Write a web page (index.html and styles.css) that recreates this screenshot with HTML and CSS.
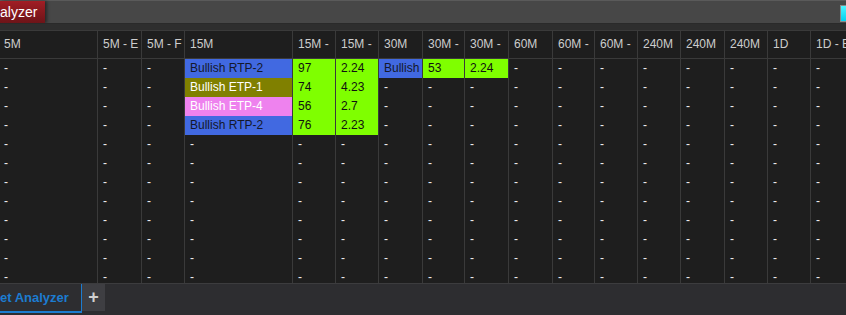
FILE: index.html
```html
<!DOCTYPE html>
<html lang="en">
<head>
    <meta charset="UTF-8">
    <title>Market Analyzer</title>
    <link rel="stylesheet" href="styles.css">
</head>
<body>
    <div class="topbar">
        <div class="doc-tab">alyzer</div>
        <div class="topbar-fill"></div>
        <div class="swatch"></div>
    </div>
    <div class="band"></div>

    <div class="grid-wrap">
        <div class="grid" id="grid">
            <!-- header + rows are built below -->
        </div>
    </div>

    <div class="tabbar">
        <div class="tab">et Analyzer</div>
        <div class="add-tab">+</div>
    </div>

    <script>
        const headers = ['5M', '5M - E', '5M - F', '15M', '15M -', '15M -', '30M', '30M -', '30M -',
            '60M', '60M -', '60M -', '240M', '240M', '240M', '1D', '1D - E'];

        // colored cells per row: column index -> [text, class]
        const filled = [
            { 3: ['Bullish RTP-2', 'blue'], 4: ['97', 'green'], 5: ['2.24', 'green'],
              6: ['Bullish', 'blue'], 7: ['53', 'green'], 8: ['2.24', 'green'] },
            { 3: ['Bullish ETP-1', 'olive'], 4: ['74', 'green'], 5: ['4.23', 'green'] },
            { 3: ['Bullish ETP-4', 'violet'], 4: ['56', 'green'], 5: ['2.7', 'green'] },
            { 3: ['Bullish RTP-2', 'blue'], 4: ['76', 'green'], 5: ['2.23', 'green'] }
        ];

        const grid = document.getElementById('grid');

        const head = document.createElement('div');
        head.className = 'row head';
        headers.forEach(h => {
            const cell = document.createElement('div');
            cell.className = 'cell';
            cell.textContent = h;
            head.appendChild(cell);
        });
        grid.appendChild(head);

        for (let r = 0; r < 12; r++) {
            const row = document.createElement('div');
            row.className = 'row';
            const data = filled[r] || {};
            headers.forEach((h, c) => {
                const cell = document.createElement('div');
                cell.className = 'cell';
                if (data[c]) {
                    cell.textContent = data[c][0];
                    cell.classList.add(data[c][1]);
                } else {
                    cell.textContent = '-';
                }
                row.appendChild(cell);
            });
            grid.appendChild(row);
        }
    </script>
</body>
</html>
```

FILE: styles.css
```css
html, body {
    margin: 0;
    padding: 0;
}

body {
    width: 846px;
    height: 315px;
    overflow: hidden;
    background-color: #1e1e1e;
    font-family: "Liberation Sans", Arial, sans-serif;
    font-size: 12px;
    display: flex;
    flex-direction: column;
}

/* top document strip */
.topbar {
    height: 22px;
    flex: none;
    display: flex;
    align-items: stretch;
    background-color: #474747;
    border-top: 1px solid #5a5a5a;
}

.doc-tab {
    width: 45px;
    box-sizing: border-box;
    padding-left: 0;
    color: #ffffff;
    font-size: 14px;
    line-height: 22px;
    background: linear-gradient(#a11d24, #6d1418);
    box-shadow: 2px 0 3px rgba(0, 0, 0, 0.45);
}

.topbar-fill {
    flex: 1;
}

.swatch {
    width: 5px;
    height: 15px;
    margin-top: 4px;
    background: linear-gradient(#4ff3ff, #00d2f0);
    border: 1px solid #8a8a8a;
    border-right: none;
}

.band {
    height: 6px;
    flex: none;
    background-color: #2e2e2e;
    border-top: 1px solid #2a2a2a;
}

/* grid */
.grid-wrap {
    flex: 1;
    overflow: hidden;
    border-top: 1px solid #3a3a3a;
}

.grid {
    width: 890px;
}

.row {
    display: grid;
    grid-template-columns: 97px 44px 43px 108px 43px 43px 44px 42px 44px 44px 42px 43px 43px 44px 43px 43px 80px;
    height: 19px;
}

.row.head {
    height: 27px;
    border-bottom: 1px solid #3a3a3a;
}

.cell {
    box-sizing: border-box;
    border-left: 1px solid #3a3a3a;
    padding-left: 5px;
    white-space: nowrap;
    overflow: hidden;
    color: #f0f0f0;
    line-height: 19px;
}

.cell:first-child {
    border-left: none;
    padding-left: 4px;
}

.head .cell {
    color: #cdcdcd;
    line-height: 27px;
}

.blue {
    background-color: #4169e1;
    color: #14182a;
}

.olive {
    background-color: #808000;
    color: #ffffff;
}

.violet {
    background-color: #ee82ee;
    color: #ffffff;
}

.green {
    background-color: #7fff00;
    color: #111111;
}

/* bottom tab strip */
.tabbar {
    height: 31px;
    flex: none;
    display: flex;
    align-items: flex-start;
    background-color: #2d2d30;
    border-top: 1px solid #3c3c3e;
}

.tab {
    width: 82px;
    height: 29px;
    box-sizing: border-box;
    border-right: 1px solid #1c7cd0;
    border-bottom: 2px solid #1c7cd0;
    color: #1c7cd0;
    font-size: 13px;
    font-weight: bold;
    line-height: 27px;
    padding-left: 0;
}

.add-tab {
    width: 23px;
    height: 27px;
    background-color: #3e3e42;
    color: #d0d0d0;
    font-size: 18px;
    font-weight: bold;
    line-height: 26px;
    text-align: center;
}
```
